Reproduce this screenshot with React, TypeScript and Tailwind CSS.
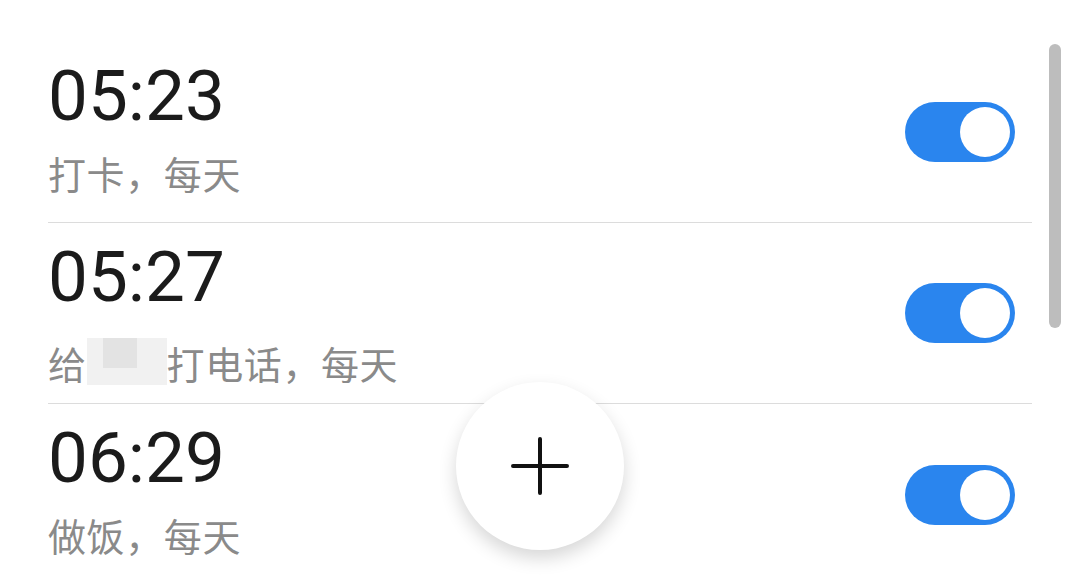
import { useState } from 'react';

type Alarm = { time: string; label: React.ReactNode; on: boolean };

function Toggle({ on, onClick }: { on: boolean; onClick: () => void }) {
  return (
    <button
      type="button"
      onClick={onClick}
      className={`flex h-[60px] w-[110px] items-center rounded-full p-[5px] ${on ? 'justify-end bg-[#2a85ee]' : 'justify-start bg-[#c8c8c8]'}`}
    >
      <span className="block h-[50px] w-[50px] rounded-full bg-white" />
    </button>
  );
}

export default function App() {
  const [alarms, setAlarms] = useState<Alarm[]>([
    { time: '05:23', label: '打卡，每天', on: true },
    {
      time: '05:27',
      label: (
        <>
          给
          <span className="inline-block h-[47px] w-[80px] translate-y-[6px] bg-[#f1f1f1] align-baseline">
            <span className="ml-[16px] block h-[30px] w-[34px] bg-[#e3e3e3]" />
          </span>
          打电话，每天
        </>
      ),
      on: true,
    },
    { time: '06:29', label: '做饭，每天', on: true },
  ]);

  const toggle = (i: number) =>
    setAlarms((a) => a.map((x, j) => (j === i ? { ...x, on: !x.on } : x)));

  return (
    <div className="relative h-[583px] w-[1080px] overflow-hidden bg-white">
      <div className="pl-[48px] pr-[48px] pt-[42px]">
        {alarms.map((a, i) => (
          <div
            key={a.time}
            className={`flex h-[181px] items-center justify-between ${i < alarms.length - 1 ? 'border-b border-[#dcdcdc]' : ''}`}
          >
            <div className="flex flex-col self-start pt-[19px]">
              <div className="font-['Roboto',sans-serif] text-[71px] leading-[70px] text-[#1b1b1b]">
                {a.time}
              </div>
              <div className="mt-[20px] font-['Noto_Sans_CJK_SC',sans-serif] text-[38px] leading-[44px] tracking-[0.6px] text-[#8a8a8a]">
                {a.label}
              </div>
            </div>
            <div className="mr-[17px]">
              <Toggle on={a.on} onClick={() => toggle(i)} />
            </div>
          </div>
        ))}
      </div>

      {/* scrollbar */}
      <div className="absolute left-[1049px] top-[44px] h-[284px] w-[12px] rounded-full bg-[#bdbdbd]" />

      {/* add button */}
      <button
        type="button"
        className="absolute left-[456px] top-[382px] flex h-[168px] w-[168px] items-center justify-center rounded-full bg-white shadow-[0_8px_18px_rgba(0,0,0,0.16)]"
      >
        <svg width="58" height="58" viewBox="0 0 58 58" fill="none" stroke="#111" strokeWidth="4" strokeLinecap="round">
          <path d="M29 2v54M2 29h54" />
        </svg>
      </button>
    </div>
  );
}
